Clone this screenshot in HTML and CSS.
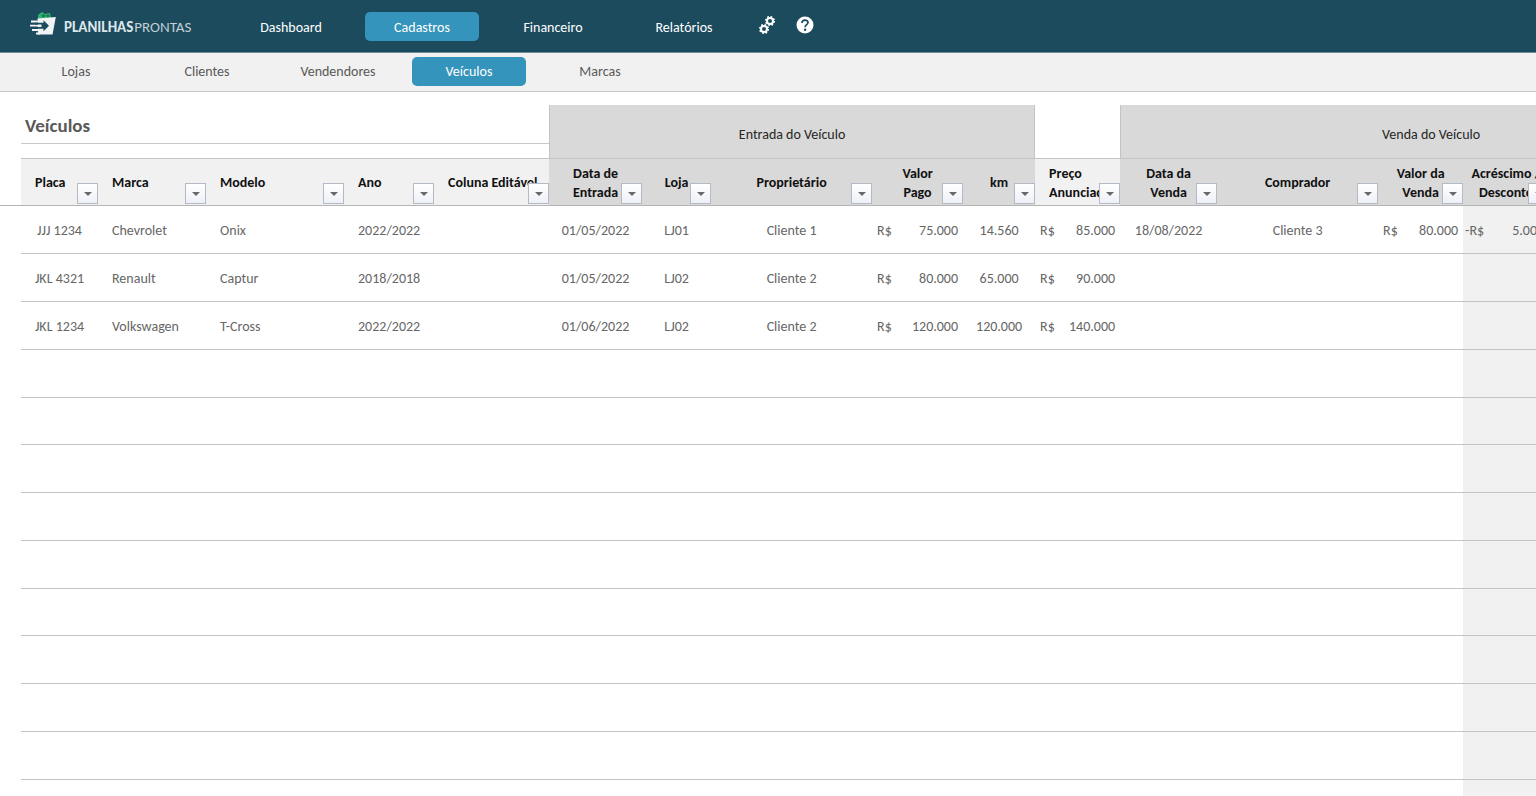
FILE: index.html
```html
<!DOCTYPE html>
<html lang="pt-BR">
<head>
<meta charset="utf-8">
<title>Planilhas Prontas - Veículos</title>
<link rel="stylesheet" href="styles.css">
</head>
<body>
<header class="topbar">
  <a class="brand" href="#">
    <svg class="brand-icon" viewBox="0 0 26 24" aria-hidden="true">
      <path d="M8 7V3l4-3 3 2 5-1 1 5-3 2z" fill="#2fb573"/>
      <path d="M11 3l3-1 2 2-3 2zM16 3l3-1 1 3-3 1z" fill="#1d7f55"/>
      <path d="M7.500 6.500L25.800 5 22.500 22.500H8z" fill="#f1f4f5"/>
      <path d="M0 8h8v3H2v1.500H0zM2 19.500h6v3H6z" fill="#1c4b5e"/>
      <path d="M1 9.500h10M0 13.700h10M2 18h9M6 21.500h4" stroke="#f1f4f5" stroke-width="1.800"/>
      <path d="M5 11.600h10M3 15.900h12" stroke="#1c4b5e" stroke-width="1.800"/>
      <path d="M13.500 8.300l5.500 5.500-5.500 5.500v-3.500h-2v-4h2z" fill="#1c4b5e"/>
    </svg>
    <span class="brand-name"><b>PLANILHAS</b><span class="brand-light">PRONTAS</span></span>
  </a>
  <nav class="menu" aria-label="Principal">
    <a class="tab" href="#">Dashboard</a>
    <a class="tab active" href="#">Cadastros</a>
    <a class="tab" href="#">Financeiro</a>
    <a class="tab" href="#">Relatórios</a>
  </nav>
  <div class="tools">
    <button class="tool" aria-label="Configurações">
      <svg viewBox="0 0 18 18" aria-hidden="true">
        <g fill="none" stroke="#fff">
          <circle cx="12" cy="5" r="3" stroke-width="2"/>
          <circle cx="12" cy="5" r="4.300" stroke-width="1.500" stroke-dasharray="1.700 1.677"/>
          <circle cx="6" cy="13" r="3" stroke-width="2"/>
          <circle cx="6" cy="13" r="4.300" stroke-width="1.500" stroke-dasharray="1.700 1.677"/>
        </g>
      </svg>
    </button>
    <button class="tool" aria-label="Ajuda">
      <svg viewBox="0 0 18 18" aria-hidden="true">
        <circle cx="9" cy="9" r="8.500" fill="#fff"/>
        <path d="M6 7c0-3.800 6-3.700 6-.4 0 2-2.900 2.200-2.900 4.600" fill="none" stroke="#1c4b5e" stroke-width="1.700"/>
        <circle cx="9.100" cy="13.700" r="1.200" fill="#1c4b5e"/>
      </svg>
    </button>
  </div>
</header>
<nav class="subbar" aria-label="Cadastros">
  <a class="tab" href="#">Lojas</a>
  <a class="tab" href="#">Clientes</a>
  <a class="tab" href="#">Vendendores</a>
  <a class="tab active" href="#">Veículos</a>
  <a class="tab" href="#">Marcas</a>
</nav>
<main class="sheet">
  <table class="grid">
    <colgroup>
      <col class="w-gutter"><col class="w-placa"><col class="w-marca"><col class="w-modelo"><col class="w-ano"><col class="w-extra">
      <col class="w-data"><col class="w-loja"><col class="w-pessoa"><col class="w-valor"><col class="w-km"><col class="w-preco">
      <col class="w-venda"><col class="w-pessoa"><col class="w-preco"><col class="w-ajuste"><col class="w-resto">
    </colgroup>
    <thead>
      <tr class="groups">
        <td></td>
        <td class="title-cell" colspan="5"><h1 class="title">Veículos</h1></td>
        <th class="group" colspan="5" scope="colgroup">Entrada do Veículo</th>
        <td></td>
        <th class="group" colspan="5" scope="colgroup">Venda do Veículo</th>
      </tr>
      <tr class="heads">
        <td></td>
        <th class="left" scope="col">Placa<button class="filter" aria-label="Filtrar Placa"></button></th>
        <th class="left" scope="col">Marca<button class="filter" aria-label="Filtrar Marca"></button></th>
        <th class="left" scope="col">Modelo<button class="filter" aria-label="Filtrar Modelo"></button></th>
        <th class="left" scope="col">Ano<button class="filter" aria-label="Filtrar Ano"></button></th>
        <th class="left" scope="col">Coluna Editável<button class="filter" aria-label="Filtrar Coluna Editável"></button></th>
        <th class="dark" scope="col">Data de<br>Entrada<button class="filter" aria-label="Filtrar Data de Entrada"></button></th>
        <th class="dark" scope="col">Loja<button class="filter" aria-label="Filtrar Loja"></button></th>
        <th class="dark" scope="col">Proprietário<button class="filter" aria-label="Filtrar Proprietário"></button></th>
        <th class="dark" scope="col">Valor<br>Pago<button class="filter" aria-label="Filtrar Valor Pago"></button></th>
        <th class="dark" scope="col">km<button class="filter" aria-label="Filtrar km"></button></th>
        <th class="left" scope="col">Preço<br>Anunciado<button class="filter" aria-label="Filtrar Preço Anunciado"></button></th>
        <th class="dark" scope="col">Data da<br>Venda<button class="filter" aria-label="Filtrar Data da Venda"></button></th>
        <th class="dark" scope="col">Comprador<button class="filter" aria-label="Filtrar Comprador"></button></th>
        <th class="dark" scope="col">Valor da<br>Venda<button class="filter" aria-label="Filtrar Valor da Venda"></button></th>
        <th class="dark" scope="col">Acréscimo /<br>Desconto<button class="filter" aria-label="Filtrar Acréscimo / Desconto"></button></th>
        <th class="dark" scope="col"></th>
      </tr>
    </thead>
    <tbody>
      <tr><td></td><td>JJJ 1234</td><td class="left">Chevrolet</td><td class="left">Onix</td><td class="left">2022/2022</td><td></td><td>01/05/2022</td><td>LJ01</td><td>Cliente 1</td><td><div class="money"><span>R$</span><span>75.000</span></div></td><td>14.560</td><td><div class="money"><span>R$</span><span>85.000</span></div></td><td>18/08/2022</td><td>Cliente 3</td><td><div class="money"><span>R$</span><span>80.000</span></div></td><td class="calc"><div class="money negative"><span>-R$</span><span>5.000</span></div></td><td class="calc"></td></tr>
      <tr><td></td><td>JKL 4321</td><td class="left">Renault</td><td class="left">Captur</td><td class="left">2018/2018</td><td></td><td>01/05/2022</td><td>LJ02</td><td>Cliente 2</td><td><div class="money"><span>R$</span><span>80.000</span></div></td><td>65.000</td><td><div class="money"><span>R$</span><span>90.000</span></div></td><td></td><td></td><td></td><td class="calc"></td><td class="calc"></td></tr>
      <tr><td></td><td>JKL 1234</td><td class="left">Volkswagen</td><td class="left">T-Cross</td><td class="left">2022/2022</td><td></td><td>01/06/2022</td><td>LJ02</td><td>Cliente 2</td><td><div class="money"><span>R$</span><span>120.000</span></div></td><td>120.000</td><td><div class="money"><span>R$</span><span>140.000</span></div></td><td></td><td></td><td></td><td class="calc"></td><td class="calc"></td></tr>
      <tr><td></td><td colspan="14"></td><td class="calc"></td><td class="calc"></td></tr>
      <tr><td></td><td colspan="14"></td><td class="calc"></td><td class="calc"></td></tr>
      <tr><td></td><td colspan="14"></td><td class="calc"></td><td class="calc"></td></tr>
      <tr><td></td><td colspan="14"></td><td class="calc"></td><td class="calc"></td></tr>
      <tr><td></td><td colspan="14"></td><td class="calc"></td><td class="calc"></td></tr>
      <tr><td></td><td colspan="14"></td><td class="calc"></td><td class="calc"></td></tr>
      <tr><td></td><td colspan="14"></td><td class="calc"></td><td class="calc"></td></tr>
      <tr><td></td><td colspan="14"></td><td class="calc"></td><td class="calc"></td></tr>
      <tr><td></td><td colspan="14"></td><td class="calc"></td><td class="calc"></td></tr>
      <tr><td></td><td colspan="14"></td><td class="calc"></td><td class="calc"></td></tr>
    </tbody>
  </table>
</main>
</body>
</html>
```
FILE: styles.css
```css
* { box-sizing: border-box; }

body {
  margin: 0;
  height: 100vh;
  display: flex;
  flex-direction: column;
  overflow: hidden;
  background: #fff;
  color: #595959;
  font: 14px/20px Carlito, "Open Sans", sans-serif;
}

button { padding: 0; border: 0; background: none; cursor: pointer; }
a { color: inherit; text-decoration: none; }

.topbar {
  flex: none;
  display: flex;
  align-items: center;
  height: 53px;
  background: #1c4b5e;
  border-bottom: 1px solid #6f8a97;
  color: #fff;
}
.brand {
  display: flex;
  align-items: center;
  gap: 8px;
  width: 234px;
  padding-left: 30px;
  color: #dfe6ea;
}
.brand-icon { width: 26px; height: 24px; margin-bottom: 4px; }
.brand-name { padding-top: 2px; font-size: 15px; white-space: nowrap; }
.brand-light { margin-left: 1px; color: #c3cfd5; }

.menu { display: flex; gap: 17px; }
.tab {
  width: 114px;
  padding: 6px 0 4px;
  border-radius: 5px;
  text-align: center;
  line-height: 19px;
}
.active { background: #3594bb; color: #fff; }

.tools { display: flex; gap: 20px; padding: 0 0 2px 17px; }
.tool { width: 18px; height: 18px; }
.tool svg { display: block; width: 18px; height: 18px; }

.subbar {
  flex: none;
  display: flex;
  align-items: center;
  gap: 17px;
  height: 39px;
  padding: 0 0 2px 19px;
  background: #f1f1f1;
  border-bottom: 1px solid #c8c8c8;
}
.subbar .tab { padding: 5px 0; }

.sheet { flex: 1; overflow: hidden; padding-top: 13px; }
.grid { width: 1742px; table-layout: fixed; border-collapse: separate; border-spacing: 0; }
.w-gutter { width: 21px; }
.w-placa { width: 77px; }
.w-marca { width: 108px; }
.w-modelo { width: 138px; }
.w-ano { width: 90px; }
.w-extra { width: 115px; }
.w-data { width: 93px; }
.w-loja { width: 69px; }
.w-pessoa { width: 161px; }
.w-valor { width: 91px; }
.w-km { width: 72px; }
.w-preco { width: 85px; }
.w-venda { width: 97px; }
.w-ajuste { width: 86px; }
.w-resto { width: 193px; }

td, th { padding: 0; text-align: center; vertical-align: middle; white-space: nowrap; }
.left { text-align: left; padding-left: 14px; }

.groups { height: 53px; }
.title-cell { vertical-align: top; }
.title {
  height: 39px;
  margin: 0;
  padding: 8px 4px;
  border-bottom: 1px solid #c8c8c8;
  font-size: 19px;
  line-height: 26px;
  text-align: left;
}
.group {
  padding-top: 6px;
  background: #d9d9d9;
  border: solid #c4c4c4;
  border-width: 0 1px;
  color: #262626;
  font-weight: 400;
}

.heads { height: 48px; }
.heads th {
  position: relative;
  overflow: hidden;
  padding-top: 1px;
  background: #f1f1f1;
  border-top: 1px solid #c4c4c4;
  color: #111;
  line-height: 19px;
}
.heads .dark { background: #d9d9d9; }
.heads th, .heads td { border-bottom: 1px solid #b4b4b4; }
.filter {
  position: absolute;
  right: 0;
  bottom: 1px;
  width: 21px;
  height: 21px;
  border: 1px solid #b3bac5;
  background: linear-gradient(#fff, #edf0f6);
}
.filter::after {
  content: "";
  display: block;
  width: 0;
  margin: 1px auto 0;
  border: solid transparent;
  border-width: 4px 4px 0;
  border-top-color: #686868;
}

tbody tr { height: 48px; }
tbody tr:nth-child(4n+5) { height: 47px; }
tbody td { padding-top: 2px; border-bottom: 1px solid #c4c4c4; color: #666; }
tbody td:first-child { border-bottom: 0; }
tbody .calc { background: #f1f1f1; }
.money { display: flex; justify-content: space-between; padding: 0 5px; }
.negative { padding-left: 2px; }
```
